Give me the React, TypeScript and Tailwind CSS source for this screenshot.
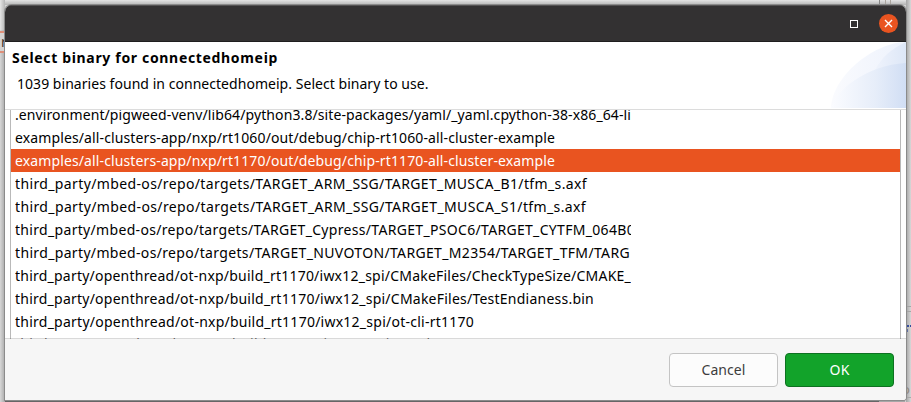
import { useLayoutEffect, useRef, useState } from 'react';

// Single line of text whose tracking is tuned so that it spans a given width.
function Line({ text, width, className = '' }: { text: string; width: number; className?: string }) {
  const ref = useRef<HTMLSpanElement>(null);
  const [spacing, setSpacing] = useState(0);
  useLayoutEffect(() => {
    if (!ref.current) return;
    const natural = ref.current.getBoundingClientRect().width;
    setSpacing((width - natural) / text.length);
  }, [text, width]);
  return (
    <span ref={ref} className={`inline-block shrink-0 whitespace-pre ${className}`} style={{ letterSpacing: `${spacing}px` }}>
      {text}
    </span>
  );
}

const rows = [
  { text: '.environment/pigweed-venv/lib64/python3.8/site-packages/yaml/_yaml.cpython-38-x86_64-li', width: 616 },
  { text: 'examples/all-clusters-app/nxp/rt1060/out/debug/chip-rt1060-all-cluster-example', width: 540 },
  { text: 'examples/all-clusters-app/nxp/rt1170/out/debug/chip-rt1170-all-cluster-example', width: 540, selected: true },
  { text: 'third_party/mbed-os/repo/targets/TARGET_ARM_SSG/TARGET_MUSCA_B1/tfm_s.axf', width: 572 },
  { text: 'third_party/mbed-os/repo/targets/TARGET_ARM_SSG/TARGET_MUSCA_S1/tfm_s.axf', width: 571 },
  { text: 'third_party/mbed-os/repo/targets/TARGET_Cypress/TARGET_PSOC6/TARGET_CYTFM_064B0', width: 620 },
  { text: 'third_party/mbed-os/repo/targets/TARGET_NUVOTON/TARGET_M2354/TARGET_TFM/TARG', width: 615 },
  { text: 'third_party/openthread/ot-nxp/build_rt1170/iwx12_spi/CMakeFiles/CheckTypeSize/CMAKE_', width: 616 },
  { text: 'third_party/openthread/ot-nxp/build_rt1170/iwx12_spi/CMakeFiles/TestEndianess.bin', width: 579 },
  { text: 'third_party/openthread/ot-nxp/build_rt1170/iwx12_spi/ot-cli-rt1170', width: 459 },
  { text: 'third_party/openthread/ot-nxp/build_rt1170/iwx12_spi/ot-ctl-rt1170', width: 465 },
];

function Swoosh() {
  return (
    <svg className="h-[67px] w-[76px]" viewBox="0 0 76 67">
      <defs>
        <linearGradient id="outer" x1="0" x2="1">
          <stop offset="0" stopColor="#fafbfe" />
          <stop offset="1" stopColor="#edf2fc" />
        </linearGradient>
        <linearGradient id="side" x1="0" x2="1">
          <stop offset="0" stopColor="#eff3fc" />
          <stop offset="1" stopColor="#dde7f7" />
        </linearGradient>
        <linearGradient id="inner" x1="0" x2="1">
          <stop offset="0" stopColor="#fbfcff" />
          <stop offset="0.6" stopColor="#e6edf9" />
          <stop offset="1" stopColor="#d1def4" />
        </linearGradient>
      </defs>
      <path d="M1 66C2 35 42 1 76 0V66Z" fill="url(#outer)" />
      <path d="M76 0C61 7 52 15 45 28V66H76Z" fill="url(#side)" />
      <path d="M1 66C5 49 36 23 76 21V66Z" fill="url(#inner)" />
    </svg>
  );
}

export default function App() {
  return (
    <div className="relative h-[402px] w-[911px] overflow-hidden bg-[#d5d5d5] pt-[5px] pl-[5px] font-['Noto_Sans','Open_Sans',sans-serif] text-[14px] text-black">
      {/* Slivers of the desktop behind the dialog */}
      <div className="absolute top-0 left-0 h-[5px] w-[911px] bg-gradient-to-b from-[#e4e4e4] to-[#b4b4b4]" />
      <div className="absolute top-0 left-0 h-[402px] w-[5px] bg-gradient-to-r from-[#d8d8d8] to-[#a9a9a9]" />
      <div className="absolute top-0 left-0 h-[30px] w-[5px] bg-gradient-to-r from-[#e6e6e6] to-[#b5b5b5]" />
      <div className="absolute top-[31px] left-0 h-[22px] w-[5px] border-y-2 border-[#df8f79] bg-[#d6d4d3] text-[14px] leading-[18px]">
        <span className="absolute top-0 left-[1px] text-[#40352c]">r</span>
      </div>
      <div className="absolute top-0 left-[879px] h-[5px] w-px bg-[#858585]" />
      <div className="absolute top-0 left-[885px] h-[5px] w-[6px] border-x border-[#aaa49e]" />
      <div className="absolute top-0 left-[906px] h-[402px] w-[5px] bg-gradient-to-r from-[#a5a5a5] to-[#d8d8d8]" />
      <div className="absolute top-[306px] left-[906px] h-[6px] w-[5px] border-y border-[#a5a5a5]" />
      <div className="absolute top-[325px] left-[907px] h-[2px] w-[2px] bg-[#354c9b]" />
      <div className="absolute top-[325px] left-[910px] h-[2px] w-px bg-[#354c9b]" />
      <div className="absolute top-[329px] left-[906px] h-[3px] w-[2px] bg-[#6170a3]" />
      <div className="absolute top-[382px] left-[902px] text-[13px] leading-[15px] text-[#92887f]">o</div>
      <div className="absolute top-[397px] left-[906px] h-px w-[5px] bg-[#a9a9a9]" />
      <div className="absolute top-[400px] left-[5px] h-[2px] w-[874px] bg-[#666]" />
      <div className="absolute top-[400px] left-[879px] h-[2px] w-[26px] bg-[#a7a7a7]" />

      <main className="relative flex h-[395px] w-[901px] flex-col overflow-hidden rounded-t-[7px] rounded-br-[3px] bg-[#f6f6f6] shadow-[0_0_0_1px_#8b8b8b]">
        <header className="flex h-[37px] shrink-0 items-center justify-end border-t border-b border-t-[#555354] border-b-[#1f1e1f] bg-[#333132] pr-[8px]">
          <div className="mr-[21px] size-2 border border-white" />
          <div className="flex size-[19px] items-center justify-center rounded-full bg-[#e95420]">
            <svg className="size-[9px]" viewBox="0 0 9 9" stroke="#fff" strokeWidth="1.4">
              <path d="M1 1L8 8M8 1L1 8" />
            </svg>
          </div>
        </header>

        <section className="flex h-[67px] shrink-0 justify-between overflow-hidden bg-white">
          <div className="pt-[5px] pl-[7px]">
            <div className="flex h-5 items-center font-bold">
              <Line text="Select binary for connectedhomeip" width={266} />
            </div>
            <div className="mt-[6px] flex h-5 items-center pl-[5px]">
              <Line text="1039 binaries found in connectedhomeip. Select binary to use." width={411.5} />
            </div>
          </div>
          <Swoosh />
        </section>
        <div className="h-px shrink-0 bg-[#dcdcdc]" />

        <section className="h-[229px] shrink-0 overflow-hidden bg-white px-[5px]">
          <ul className="h-[229px] overflow-hidden border-x border-[#b9b9b9]">
            {rows.map((row, i) => (
              <li
                key={i}
                className={`flex h-[23px] items-center pl-1 ${i === 0 ? '-mt-[7px]' : ''} ${
                  i === rows.length - 1 ? 'leading-[21px] text-black/60' : 'leading-[23px]'
                } ${row.selected ? 'bg-[#e95420] text-white' : ''}`}
              >
                <div className="flex h-[23px] w-[616px] overflow-hidden">
                  <Line text={row.text} width={row.width} />
                </div>
              </li>
            ))}
          </ul>
        </section>

        {/* The footer's translucent rule lies over the last pixel row of the list */}
        <footer className="relative -mt-px flex grow items-start justify-end gap-[7px] border-t border-black/15 bg-[#f6f6f6] bg-clip-padding pt-[14px] pr-[12px]">
          <button className="flex h-[34px] w-[109px] items-center justify-center rounded-[4px] border border-[#c4c4c4] bg-[#fcfcfc] pb-[2px] text-[#3d3d3d]">
            <Line text="Cancel" width={44} />
          </button>
          <button className="flex h-[34px] w-[109px] items-center justify-center rounded-[4px] border border-[#0d7221] bg-[#12a32a] pb-[2px] text-white">
            <Line text="OK" width={20} />
          </button>
        </footer>
      </main>
    </div>
  );
}
